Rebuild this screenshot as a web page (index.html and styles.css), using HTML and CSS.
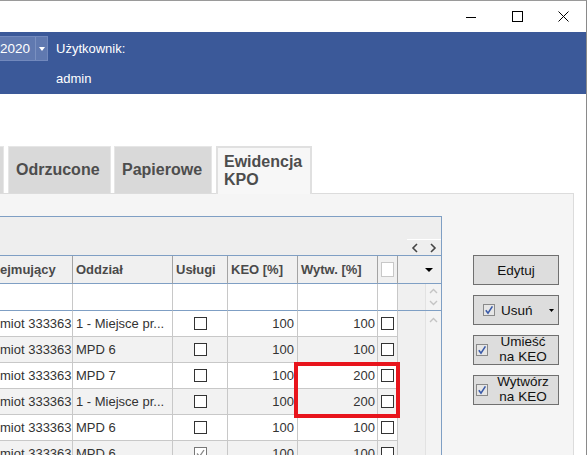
FILE: index.html
```html
<!DOCTYPE html>
<html lang="pl">
<head>
  <meta charset="UTF-8" />
  <meta name="viewport" content="width=device-width, initial-scale=1.0" />
  <title>Ewidencja KPO</title>
  <link rel="stylesheet" href="styles.css">
</head>
<body>
<div class="window">
  <div class="titlebar">
    <span class="win-btn"><svg width="10" height="10"><path d="M0 5.5h10" stroke="#000" /></svg></span>
    <span class="win-btn"><svg width="11" height="11"><rect x="0.5" y="0.5" width="10" height="10" fill="none" stroke="#000" /></svg></span>
    <span class="win-btn"><svg width="11" height="11"><path d="M0.5 0.5L10.5 10.5M10.5 0.5L0.5 10.5" stroke="#000" /></svg></span>
  </div>

  <div class="topbar">
    <div class="year-select">
      <span class="year-value">2020</span>
      <span class="year-arrow"><svg width="6" height="4"><path d="M0 0h6L3 4z" fill="#fff" /></svg></span>
    </div>
    <div class="user">
      <div>Użytkownik:</div>
      <div class="user-name">admin</div>
    </div>
  </div>

  <div class="content">
    <div class="tabs">
      <div class="tab tab-partial"></div>
      <div class="tab tab-odrzucone">Odrzucone</div>
      <div class="tab tab-papierowe">Papierowe</div>
      <div class="tab tab-active">Ewidencja<br>KPO</div>
    </div>

    <div class="panel">
      <div class="grid">
        <div class="grid-toolbar">
          <div class="hscroll">
            <svg width="30" height="10"><path d="M8 1L4 5l4 4M22 1l4 4-4 4" fill="none" stroke="#444" stroke-width="1.6" /></svg>
          </div>
        </div>
        <div class="grid-body">
          <div class="rows">
            <div class="row head">
              <div class="c0">ejmujący</div>
              <div>Oddział</div>
              <div>Usługi</div>
              <div>KEO [%]</div>
              <div>Wytw. [%]</div>
              <div class="center"><span class="cb cb-head"></span></div>
            </div>
            <div class="row filter">
              <div></div><div></div><div></div><div></div><div></div><div></div>
            </div>
            <div class="row">
              <div class="c0">miot 333363</div>
              <div>1 - Miejsce pr...</div>
              <div class="center"><span class="cb"></span></div>
              <div class="num">100</div>
              <div class="num n4">100</div>
              <div class="center"><span class="cb"></span></div>
            </div>
            <div class="row alt">
              <div class="c0">miot 333363</div>
              <div>MPD 6</div>
              <div class="center"><span class="cb"></span></div>
              <div class="num">100</div>
              <div class="num n4">100</div>
              <div class="center"><span class="cb"></span></div>
            </div>
            <div class="row">
              <div class="c0">miot 333363</div>
              <div>MPD 7</div>
              <div class="center"><span class="cb"></span></div>
              <div class="num">100</div>
              <div class="num n4">200</div>
              <div class="center"><span class="cb"></span></div>
            </div>
            <div class="row alt">
              <div class="c0">miot 333363</div>
              <div>1 - Miejsce pr...</div>
              <div class="center"><span class="cb"></span></div>
              <div class="num">100</div>
              <div class="num n4">200</div>
              <div class="center"><span class="cb"></span></div>
            </div>
            <div class="row">
              <div class="c0">miot 333363</div>
              <div>MPD 6</div>
              <div class="center"><span class="cb"></span></div>
              <div class="num">100</div>
              <div class="num n4">100</div>
              <div class="center"><span class="cb"></span></div>
            </div>
            <div class="row alt">
              <div class="c0">miot 333363</div>
              <div>MPD 6</div>
              <div class="center"><span class="cb cb-checked"><svg width="11" height="11"><path d="M2 5.5l2.5 3L9 2" fill="none" stroke="#8a8a8a" stroke-width="1.3" /></svg></span></div>
              <div class="num">100</div>
              <div class="num n4">100</div>
              <div class="center"><span class="cb"></span></div>
            </div>
          </div>

          <div class="vscroll">
            <div class="vs-head"><svg width="8" height="4"><path d="M0 0h8L4 4z" fill="#000" /></svg></div>
            <div class="vs-part vs-filter">
              <div class="vs-gap"></div>
              <div class="vs-bar">
                <svg width="9" height="18"><path d="M1 5l3.5-3.5L8 5M1 13l3.5 3.5L8 13" fill="none" stroke="#c4c4c4" stroke-width="1.4" /></svg>
              </div>
            </div>
            <div class="vs-part vs-track">
              <div class="vs-gap"></div>
              <div class="vs-bar">
                <svg width="9" height="6"><path d="M1 5l3.5-3.5L8 5" fill="none" stroke="#c4c4c4" stroke-width="1.4" /></svg>
              </div>
            </div>
          </div>

          <div class="highlight"></div>
        </div>
      </div>

      <div class="actions">
        <button class="btn">Edytuj</button>
        <button class="btn btn-usun">
          <svg class="btn-cb" width="12" height="12"><rect x="0.5" y="0.5" width="11" height="11" fill="#e6e6e6" stroke="#8a8a8a" /><path d="M2.8 6.2l2.2 3L9.4 2.4" fill="none" stroke="#3a5aa8" stroke-width="1.6" /></svg>
          <span>Usuń</span>
          <svg class="btn-arrow" width="5" height="3"><path d="M0 0h5L2.5 3z" fill="#000" /></svg>
        </button>
        <button class="btn btn-two">
          <svg class="btn-cb" width="12" height="12"><rect x="0.5" y="0.5" width="11" height="11" fill="#e6e6e6" stroke="#8a8a8a" /><path d="M2.8 6.2l2.2 3L9.4 2.4" fill="none" stroke="#3a5aa8" stroke-width="1.6" /></svg>
          <span class="btn-label">Umieść<br>na KEO</span>
        </button>
        <button class="btn btn-two">
          <svg class="btn-cb" width="12" height="12"><rect x="0.5" y="0.5" width="11" height="11" fill="#e6e6e6" stroke="#8a8a8a" /><path d="M2.8 6.2l2.2 3L9.4 2.4" fill="none" stroke="#3a5aa8" stroke-width="1.6" /></svg>
          <span class="btn-label">Wytwórz<br>na KEO</span>
        </button>
      </div>
    </div>
  </div>
</div>
</body>
</html>
```

FILE: styles.css
```css
* { box-sizing: border-box; }
body { margin: 0; width: 588px; height: 455px; overflow: hidden; background: #fff; font-family: "Liberation Sans", Arial, sans-serif; font-size: 13px; color: #333; }

.window { width: 587px; height: 455px; overflow: hidden; border-top: 1px solid #9a9a9a; border-right: 1px solid #8a8a8a; background: #fff; }

/* title bar */
.titlebar { height: 31px; display: flex; justify-content: flex-end; }
.win-btn { width: 46px; display: flex; align-items: center; justify-content: center; }
.win-btn svg { display: block; }

/* blue header */
.topbar { height: 62px; background: #3b5999; color: #fff; display: flex; align-items: flex-start; padding-top: 4px; }
.year-select { width: 48px; height: 25px; display: flex; background: #6079b0; border: 1px solid #7289bd; border-left: none; }
.year-value { flex: 1; line-height: 23px; font-size: 13.5px; }
.year-arrow { width: 12px; border-left: 1px solid #7a90c0; display: flex; align-items: center; justify-content: center; }
.year-arrow svg { display: block; }
.user { margin-left: 8px; padding-top: 5px; line-height: 15px; }
.user-name { margin-top: 15px; }

/* tabs */
.content { padding-top: 52px; }
.tabs { height: 47px; display: flex; align-items: flex-start; }
.tab { height: 47px; background: #d9d9d9; border: 1px solid #e6e6e6; border-bottom: none; font-size: 16px; font-weight: bold; color: #4d4d4d; display: flex; align-items: center; padding-left: 7px; line-height: 18px; }
.tab-partial { width: 4px; padding: 0; border-left: none; margin-right: 4px; }
.tab-odrzucone { width: 103px; margin-right: 3px; }
.tab-papierowe { width: 98px; margin-right: 4px; }
.tab-active { width: 96px; height: 48px; background: #f7f7f7; border: 2px solid #e0e0e0; border-bottom: none; padding-left: 6px; position: relative; z-index: 1; }

/* panel */
.panel { width: 574px; background: #f5f5f5; border-top: 1px solid #dcdcdc; border-right: 1px solid #dcdcdc; padding-top: 22px; display: flex; align-items: flex-start; }

.grid { width: 442px; border-top: 1px solid #7f9fc4; border-right: 1px solid #7f9fc4; }
.grid-toolbar { height: 39px; background: #eeeeee; border-bottom: 1px solid #7f9fc4; display: flex; justify-content: flex-end; align-items: flex-end; }
.hscroll { width: 34px; height: 16px; border-top: 1px solid #fff; display: flex; align-items: center; justify-content: center; }
.hscroll svg { display: block; }

.grid-body { display: flex; position: relative; }
.rows { width: 398px; }
.row { display: grid; grid-template-columns: 73px 100px 55px 70px 80px 20px; background: #fff; }
.row > div { height: 26px; border-right: 1px solid #c8c8c8; border-bottom: 1px solid #c8c8c8; padding: 0 3px; display: flex; align-items: center; white-space: nowrap; overflow: hidden; }
.row.alt { background: #f2f2f2; }
.row .c0 { padding-left: 0; }
.row .num { justify-content: flex-end; }
.row .n4 { padding-right: 2px; }
.row .center { justify-content: center; padding: 0; }

.head { background: #f0f0f0; }
.head > div { height: 28px; border-right-color: #a3a3a3; border-bottom-color: #7f9fc4; font-weight: bold; color: #4a4a4a; }
.filter > div { height: 27px; border-bottom-color: #7f9fc4; }

.cb { display: inline-block; width: 13px; height: 13px; border: 1px solid #333; background: #fff; }
.cb svg { display: block; }
.cb-head { height: 15px; border-color: #c8c8c8; }
.cb-checked { border-color: #777; }

.vscroll { width: 43px; display: flex; flex-direction: column; }
.vs-head { height: 28px; background: #f0f0f0; border-bottom: 1px solid #7f9fc4; display: flex; align-items: center; padding-left: 27px; }
.vs-head svg { display: block; }
.vs-part { display: flex; }
.vs-filter { height: 27px; border-bottom: 1px solid #7f9fc4; }
.vs-track { flex: 1; }
.vs-gap { width: 27px; background: #f0f0f0; }
.vs-bar { flex: 1; background: #f3f3f3; border-left: 1px solid #e2e2e2; display: flex; justify-content: center; }
.vs-filter .vs-bar { align-items: center; }
.vs-track .vs-bar { padding-top: 6px; }
.vs-bar svg { display: block; }

.highlight { position: absolute; left: 294px; top: 106px; width: 106px; height: 56px; border: 4px solid #e8141c; }

/* buttons */
.actions { margin-left: 31px; padding-top: 39px; display: flex; flex-direction: column; gap: 10px; }
.btn { width: 86px; height: 30px; margin: 0; padding: 0; border: 1px solid #707070; background: #dddddd; font-family: "Liberation Sans", Arial, sans-serif; font-size: 13.5px; color: #111; display: flex; align-items: center; justify-content: center; overflow: hidden; }
.btn-cb { display: block; flex: none; }
.btn-usun { justify-content: flex-start; padding-left: 9px; padding-right: 4px; }
.btn-usun span { margin-left: 6px; }
.btn-arrow { display: block; margin-left: auto; }
.btn-two { justify-content: flex-start; padding-left: 2px; padding-bottom: 3px; }
.btn-two .btn-cb { margin-top: 3px; }
.btn-label { flex: 1; text-align: center; line-height: 15px; }
```
